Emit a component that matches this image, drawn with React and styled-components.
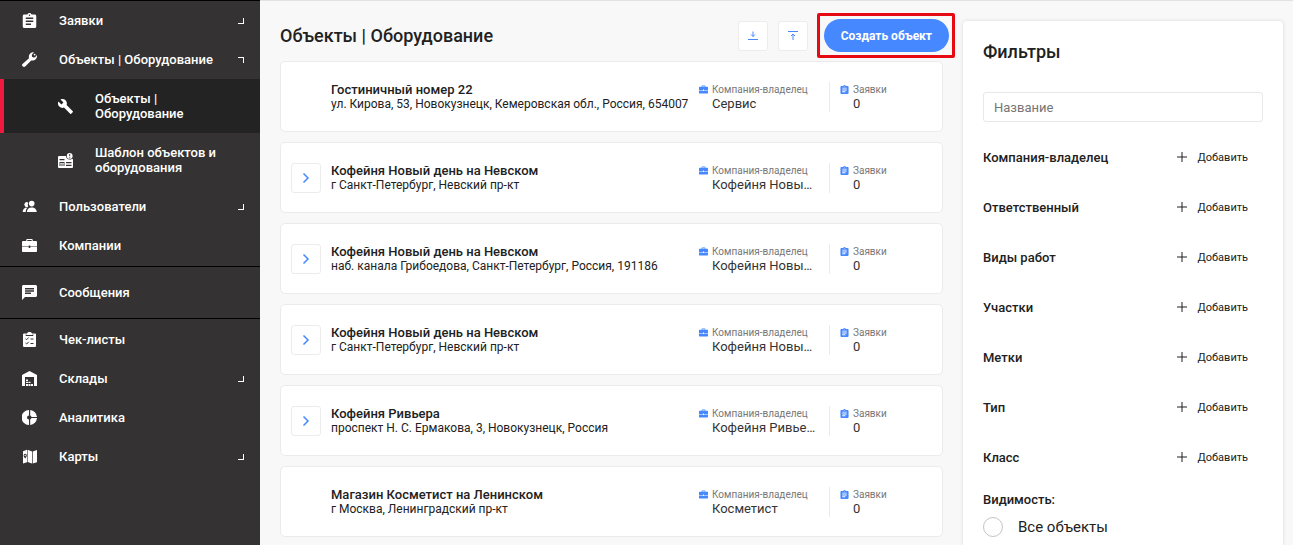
import React, { useState } from "react";
import styled, { createGlobalStyle, css } from "styled-components";
import { MdAssignment, MdBuild, MdChat } from "react-icons/md";

const GlobalStyle = createGlobalStyle`
  *, *::before, *::after { box-sizing: border-box; }
  body {
    margin: 0;
    background: #f8f8f8;
    color: #212121;
    font-family: Roboto, "Liberation Sans", sans-serif;
    font-size: 13px;
  }
  button, input { font-family: inherit; }
  h1, h2, h3, p, ul, dl, dd, fieldset { margin: 0; padding: 0; }
  ul { list-style: none; }
  fieldset { border: 0; min-width: 0; }
`;

const Shell = styled.div`
  display: grid;
  grid-template-columns: 260px minmax(0, 1fr) 320px;
  min-height: 100vh;
  padding-right: 10px;
  overflow: hidden;
`;

/* Sidebar */
const Sidebar = styled.nav`
  background: #343232;
  border-top: 1px solid #000;
`;

const NavGroup = styled.ul`
  padding: ${(p) => (p.$roomy ? "6px 0" : "0 0 1px")};
  ${(p) => p.$divided && "border-top: 1px solid #000;"}
  &:last-child { padding-top: 1px; }
`;

const NavLink = styled.a`
  display: flex;
  align-items: center;
  height: 39px;
  padding: 0 16px 0 22px;
  color: #fff;
  font-size: 13px;
  font-weight: 500;
  line-height: 15px;
  text-decoration: none;
  svg { flex: none; }
  ${(p) =>
    p.$sub &&
    css`
      height: 54px;
      padding-left: 58px;
      padding-right: 32px;
    `}
  ${(p) =>
    p.$active &&
    css`
      background: #232323;
      border-left: 4px solid #f0193f;
      padding-left: 54px;
    `}
`;

const NavText = styled.span`
  flex: 1;
  margin-left: 22px;
`;

const Corner = styled.span`
  width: 6px;
  height: 6px;
  border: solid #fff;
  border-width: ${(p) => (p.$open ? "1px 1px 0 0" : "0 1px 1px 0")};
`;

/* Object list */
const Main = styled.main`
  border-top: 1px solid #e2e2e2;
  padding: 9px 8px 8px 20px;
`;

const Header = styled.header`
  display: flex;
  align-items: center;
  height: 51px;
`;

const Title = styled.h1`
  flex: 1;
  font-size: 18px;
  font-weight: 500;
  line-height: 25px;
`;

const IconButton = styled.button`
  display: grid;
  place-items: center;
  flex: none;
  width: 30px;
  height: 30px;
  padding: 0;
  background: #fff;
  border: 1px solid #ececec;
  border-radius: 3px;
  color: #4688ff;
`;

const Tools = styled.div`
  display: flex;
  gap: 10px;
`;

const Highlight = styled.div`
  border: 3px solid #e60b12;
  border-radius: 2px;
  padding: 3px 3px 3px 4px;
  margin-left: 9px;
`;

const CreateButton = styled.button`
  display: block;
  height: 33px;
  padding: 0 17px;
  border: 0;
  border-radius: 17px;
  background: #4688ff;
  color: #fff;
  font-size: 12px;
  font-weight: 700;
`;

const List = styled.ul`
  display: grid;
  gap: 10px;
  padding-right: 12px;
`;

const Card = styled.li`
  display: grid;
  grid-template-columns: 30px minmax(0, 1fr) 130px 113px;
  align-items: center;
  height: 71px;
  padding-left: 10px;
  background: #fff;
  border: 1px solid #ebebeb;
  border-radius: 5px;
`;

const Info = styled.div`
  grid-column: 2;
  padding-left: 10px;
  white-space: nowrap;
`;

const Name = styled.h3`
  font-size: 13px;
  font-weight: 500;
  line-height: 14px;
`;

const Address = styled.p`
  font-size: 12px;
  line-height: 14px;
`;

const Fact = styled.dl`
  display: grid;
  grid-template-columns: 13px minmax(0, 1fr);
  align-content: center;
  height: 30px;
  padding-right: 13px;
  color: #4688ff;
  svg { margin-top: 2px; }
  ${(p) =>
    p.$divided &&
    css`
      border-left: 1px solid #ebebeb;
      padding-left: 10px;
    `}
`;

const FactLabel = styled.dt`
  color: #777;
  font-size: 10px;
  line-height: 13px;
  white-space: nowrap;
`;

const FactValue = styled.dd`
  grid-column: 2;
  color: #333;
  font-size: 13px;
  line-height: 15px;
  overflow: hidden;
  text-overflow: ellipsis;
  white-space: nowrap;
`;

/* Filters */
const FilterColumn = styled.div`
  display: flex;
  border-top: 1px solid #e2e2e2;
  padding-top: 20px;
  margin-right: -10px;
  padding-right: 10px;
`;

const Filters = styled.aside`
  flex: 1;
  padding: 19px 20px 0;
  background: #fff;
  border-radius: 4px 4px 0 0;
  box-shadow: 0 0 4px rgba(0, 0, 0, 0.12);
`;

const FilterTitle = styled.h2`
  font-size: 18px;
  font-weight: 500;
  line-height: 24px;
  margin-bottom: 28px;
`;

const SearchInput = styled.input`
  display: block;
  width: 100%;
  height: 30px;
  margin-bottom: 10px;
  padding: 0 10px;
  border: 1px solid #e8e8e8;
  border-radius: 3px;
  font-size: 13px;
  &::placeholder { color: #757575; opacity: 1; }
`;

const FilterRow = styled.div`
  display: flex;
  align-items: center;
  justify-content: space-between;
  height: 50px;
  padding-right: 15px;
`;

const FilterLabel = styled.span`
  font-size: 13px;
  font-weight: 500;
`;

const AddButton = styled.button`
  display: flex;
  align-items: center;
  gap: 9px;
  padding: 0;
  border: 0;
  background: none;
  color: #212121;
  font-size: 11px;
`;

const Legend = styled.legend`
  padding: 10px 0 0;
  font-size: 13px;
  font-weight: 500;
  line-height: 16px;
`;

const RadioLabel = styled.label`
  display: flex;
  align-items: center;
  gap: 15px;
  padding-top: 9px;
  font-size: 15px;
  line-height: 20px;
`;

const Radio = styled.input`
  appearance: none;
  width: 20px;
  height: 20px;
  margin: 0;
  border: 1px solid #c4c4c4;
  border-radius: 50%;
  background: #fff;
  &:checked { border: 6px solid #4688ff; }
`;

/* Icons */
const Svg = ({ size = 15, box = 15, children }) => (
  <svg width={size} height={size} viewBox={`0 0 ${box} ${box}`} fill="currentColor" aria-hidden="true">
    {children}
  </svg>
);
const ClipboardIcon = ({ size = 15 }) => <MdAssignment size={size} viewBox="3 1 18 20" aria-hidden="true" />;
const WrenchIcon = () => (
  <Svg>
    <path d="M.5 12 7 6.200C6.200 3 8.500.1 12 .3L9.800 2.800l.3 1.900 1.200.8 1.800-.3L14.900 3c.6 3.600-2.300 6.200-5.700 5.500l-6 6C1.500 16-1 13.500.5 12Z" />
    <circle cx="12.600" cy="2.600" r=".9" />
  </Svg>
);
const BuildIcon = () => <MdBuild size={15} viewBox="1 1 22 22" aria-hidden="true" />;
const TemplateIcon = () => (
  <Svg>
    <path
      fillRule="evenodd"
      d="M1 3h7c0 1.800 1.500 3.600 3.600 3.600 1 0 1.900-.3 2.500-.9.500.1.900.5.900 1.100V14a1 1 0 0 1-1 1H1a1 1 0 0 1-1-1V4a1 1 0 0 1 1-1Zm.5 3v1.200h5V6Zm0 3v4h5V9Zm6.500 0v1.200h5.500V9Zm0 2.700V13h5.500v-1.300Z"
    />
    <path d="M2 10h4v.8H2ZM2 11.600h4v.8H2Z" />
    <path fillRule="evenodd" d="M11.700 0a2.900 2.900 0 1 1 0 5.800 2.900 2.900 0 0 1 0-5.800Zm-.4 1v2.300h.9V1Zm0 2.900v.9h.9v-.9Z" />
  </Svg>
);
const PeopleIcon = () => (
  <Svg>
    <circle cx="9.700" cy="4.600" r="2.800" />
    <path d="M4.900 13c0-2.500 1.800-4.600 4.800-4.600s5 2.100 5 4.600Z" />
    <path d="M6.200 3.700a2.400 2.400 0 1 0 0 3.800A4.300 4.300 0 0 1 6.200 3.700ZM.7 13c0-3 1.700-4.700 4.900-4.600C4.300 9.500 3.800 11 3.700 13Z" />
  </Svg>
);
const BriefcaseIcon = ({ size = 15 }) => (
  <Svg size={size}>
    <path
      fillRule="evenodd"
      d="M4.300 3V2c0-.6.500-1 1.100-1h4.200c.6 0 1.100.4 1.100 1v1H14a1 1 0 0 1 1 1v4.400H8.300V7.500H6.700v.9H0V4a1 1 0 0 1 1-1Zm1 0h4.400V2H5.300ZM0 9h6.700v.9h1.600V9H15v4.200a.8.8 0 0 1-.8.8H.8a.8.8 0 0 1-.8-.8Z"
    />
  </Svg>
);
const ChatIcon = () => <MdChat size={15} viewBox="2 2 20 20" aria-hidden="true" />;
const ChecklistIcon = () => (
  <Svg>
    <path d="M2 1.500h3C5.500.5 6 0 7.500 0s2 .5 2.500 1.500h3a1 1 0 0 1 1 1V14a1 1 0 0 1-1 1H2a1 1 0 0 1-1-1V2.500a1 1 0 0 1 1-1Z" />
    <path d="M4 2.500v1h7v-1M3.500 6.700l1.200 1 2-2.200M3.500 11l1.200 1 2-2.200M8.500 7h3M8.500 11.500h3" fill="none" stroke="#343232" />
  </Svg>
);
const WarehouseIcon = () => (
  <Svg>
    <path d="M0 4 7.500 0 15 4v11h-3V6H3v9H0Z" />
    <path d="M4 8.500h2V10H4ZM4 10.700h2V12H4ZM6.500 10.700h2V12h-2ZM4 13h2v2H4ZM6.500 13h2v2h-2ZM9 13h2v2H9Z" />
  </Svg>
);
const ChartIcon = () => (
  <Svg>
    <path d="M7 0v5.500a2 2 0 0 0 0 4V15A7.500 7.500 0 0 1 7 0ZM8.200 0A7.500 7.500 0 0 1 15 6.900H9.500a2 2 0 0 0-1.300-1.300ZM8.200 15V9.400A2 2 0 0 0 9.500 8.100H15A7.500 7.500 0 0 1 8.200 15Z" />
  </Svg>
);
const MapIcon = () => (
  <Svg>
    <path
      fillRule="evenodd"
      d="M1 2.200 5 .8v12.400L1 14.600Zm4.600-1.400 4.400 1.600v12.200l-4.400-1.500ZM10.700 2.400 15 1v12.200l-4.300 1.400ZM3.200 4.800a1.700 1.700 0 0 0-1.600 1.700c0 1 .8 1.900 1.600 2.900.8-1 1.600-1.900 1.600-2.900a1.700 1.700 0 0 0-1.600-1.700Zm0 1a.7.7 0 1 1 0 1.400.7.7 0 0 1 0-1.400Z"
    />
  </Svg>
);
const LineIcon = ({ d, width = 1 }) => (
  <svg width={12} height={12} viewBox="0 0 12 12" fill="none" stroke="currentColor" strokeWidth={width} aria-hidden="true">
    <path d={d} />
  </svg>
);

const NAV = [
  {
    items: [
      { text: "Заявки", icon: ClipboardIcon, menu: true },
      { text: "Объекты | Оборудование", icon: WrenchIcon, menu: true, open: true },
      { text: "Объекты | Оборудование", icon: BuildIcon, sub: true, active: true },
      { text: "Шаблон объектов и оборудования", icon: TemplateIcon, sub: true },
      { text: "Пользователи", icon: PeopleIcon, menu: true },
      { text: "Компании", icon: BriefcaseIcon },
    ],
  },
  { roomy: true, items: [{ text: "Сообщения", icon: ChatIcon }] },
  {
    items: [
      { text: "Чек-листы", icon: ChecklistIcon },
      { text: "Склады", icon: WarehouseIcon, menu: true },
      { text: "Аналитика", icon: ChartIcon },
      { text: "Карты", icon: MapIcon, menu: true },
    ],
  },
];

const OBJECTS = [
  { name: "Гостиничный номер 22", address: "ул. Кирова, 53, Новокузнецк, Кемеровская обл., Россия, 654007", owner: "Сервис" },
  { name: "Кофейня Новый день на Невском", address: "г Санкт-Петербург, Невский пр-кт", owner: "Кофейня Новый день", nested: true },
  { name: "Кофейня Новый день на Невском", address: "наб. канала Грибоедова, Санкт-Петербург, Россия, 191186", owner: "Кофейня Новый день", nested: true },
  { name: "Кофейня Новый день на Невском", address: "г Санкт-Петербург, Невский пр-кт", owner: "Кофейня Новый день", nested: true },
  { name: "Кофейня Ривьера", address: "проспект Н. С. Ермакова, 3, Новокузнецк, Россия", owner: "Кофейня Ривьера", nested: true },
  { name: "Магазин Косметист на Ленинском", address: "г Москва, Ленинградский пр-кт", owner: "Косметист" },
];

const FILTERS = ["Компания-владелец", "Ответственный", "Виды работ", "Участки", "Метки", "Тип", "Класс"];

function NavItem({ item }) {
  const Icon = item.icon;
  return (
    <li>
      <NavLink href="#" $sub={item.sub} $active={item.active}>
        <Icon />
        <NavText>{item.text}</NavText>
        {item.menu && <Corner $open={item.open} />}
      </NavLink>
    </li>
  );
}

function ObjectCard({ object }) {
  return (
    <Card>
      {object.nested && (
        <IconButton type="button" aria-label="Развернуть">
          <LineIcon d="M3.500 1.500 8 6 3.500 10.500" width={1.5} />
        </IconButton>
      )}
      <Info>
        <Name>{object.name}</Name>
        <Address>{object.address}</Address>
      </Info>
      <Fact>
        <BriefcaseIcon size={9} />
        <FactLabel>Компания-владелец</FactLabel>
        <FactValue>{object.owner}</FactValue>
      </Fact>
      <Fact $divided>
        <ClipboardIcon size={9} />
        <FactLabel>Заявки</FactLabel>
        <FactValue>0</FactValue>
      </Fact>
    </Card>
  );
}

export default function App() {
  const [all, setAll] = useState(false);
  return (
    <>
      <GlobalStyle />
      <Shell>
        <Sidebar>
          {NAV.map((group, i) => (
            <NavGroup key={i} $roomy={group.roomy} $divided={i > 0}>
              {group.items.map((item, j) => (
                <NavItem key={j} item={item} />
              ))}
            </NavGroup>
          ))}
        </Sidebar>
        <Main>
          <Header>
            <Title>Объекты | Оборудование</Title>
            <Tools>
              <IconButton type="button" aria-label="Скачать">
                <LineIcon d="M1 9.500h10M6 1.500v5M4 4.500l2 2 2-2" />
              </IconButton>
              <IconButton type="button" aria-label="Загрузить">
                <LineIcon d="M1 1.500h10M6 10V4M4 6l2-2 2 2" />
              </IconButton>
            </Tools>
            <Highlight>
              <CreateButton type="button">Создать объект</CreateButton>
            </Highlight>
          </Header>
          <List>
            {OBJECTS.map((object, i) => (
              <ObjectCard key={i} object={object} />
            ))}
          </List>
        </Main>
        <FilterColumn>
          <Filters>
            <FilterTitle>Фильтры</FilterTitle>
            <SearchInput type="text" placeholder="Название" aria-label="Название" />
            {FILTERS.map((label) => (
              <FilterRow key={label}>
                <FilterLabel>{label}</FilterLabel>
                <AddButton type="button" aria-label={`Добавить: ${label}`}>
                  <LineIcon d="M6 1v10M1 6h10" />
                  Добавить
                </AddButton>
              </FilterRow>
            ))}
            <fieldset>
              <Legend>Видимость:</Legend>
              <RadioLabel>
                <Radio type="radio" name="visibility" checked={all} onChange={() => setAll(true)} />
                Все объекты
              </RadioLabel>
            </fieldset>
          </Filters>
        </FilterColumn>
      </Shell>
    </>
  );
}
